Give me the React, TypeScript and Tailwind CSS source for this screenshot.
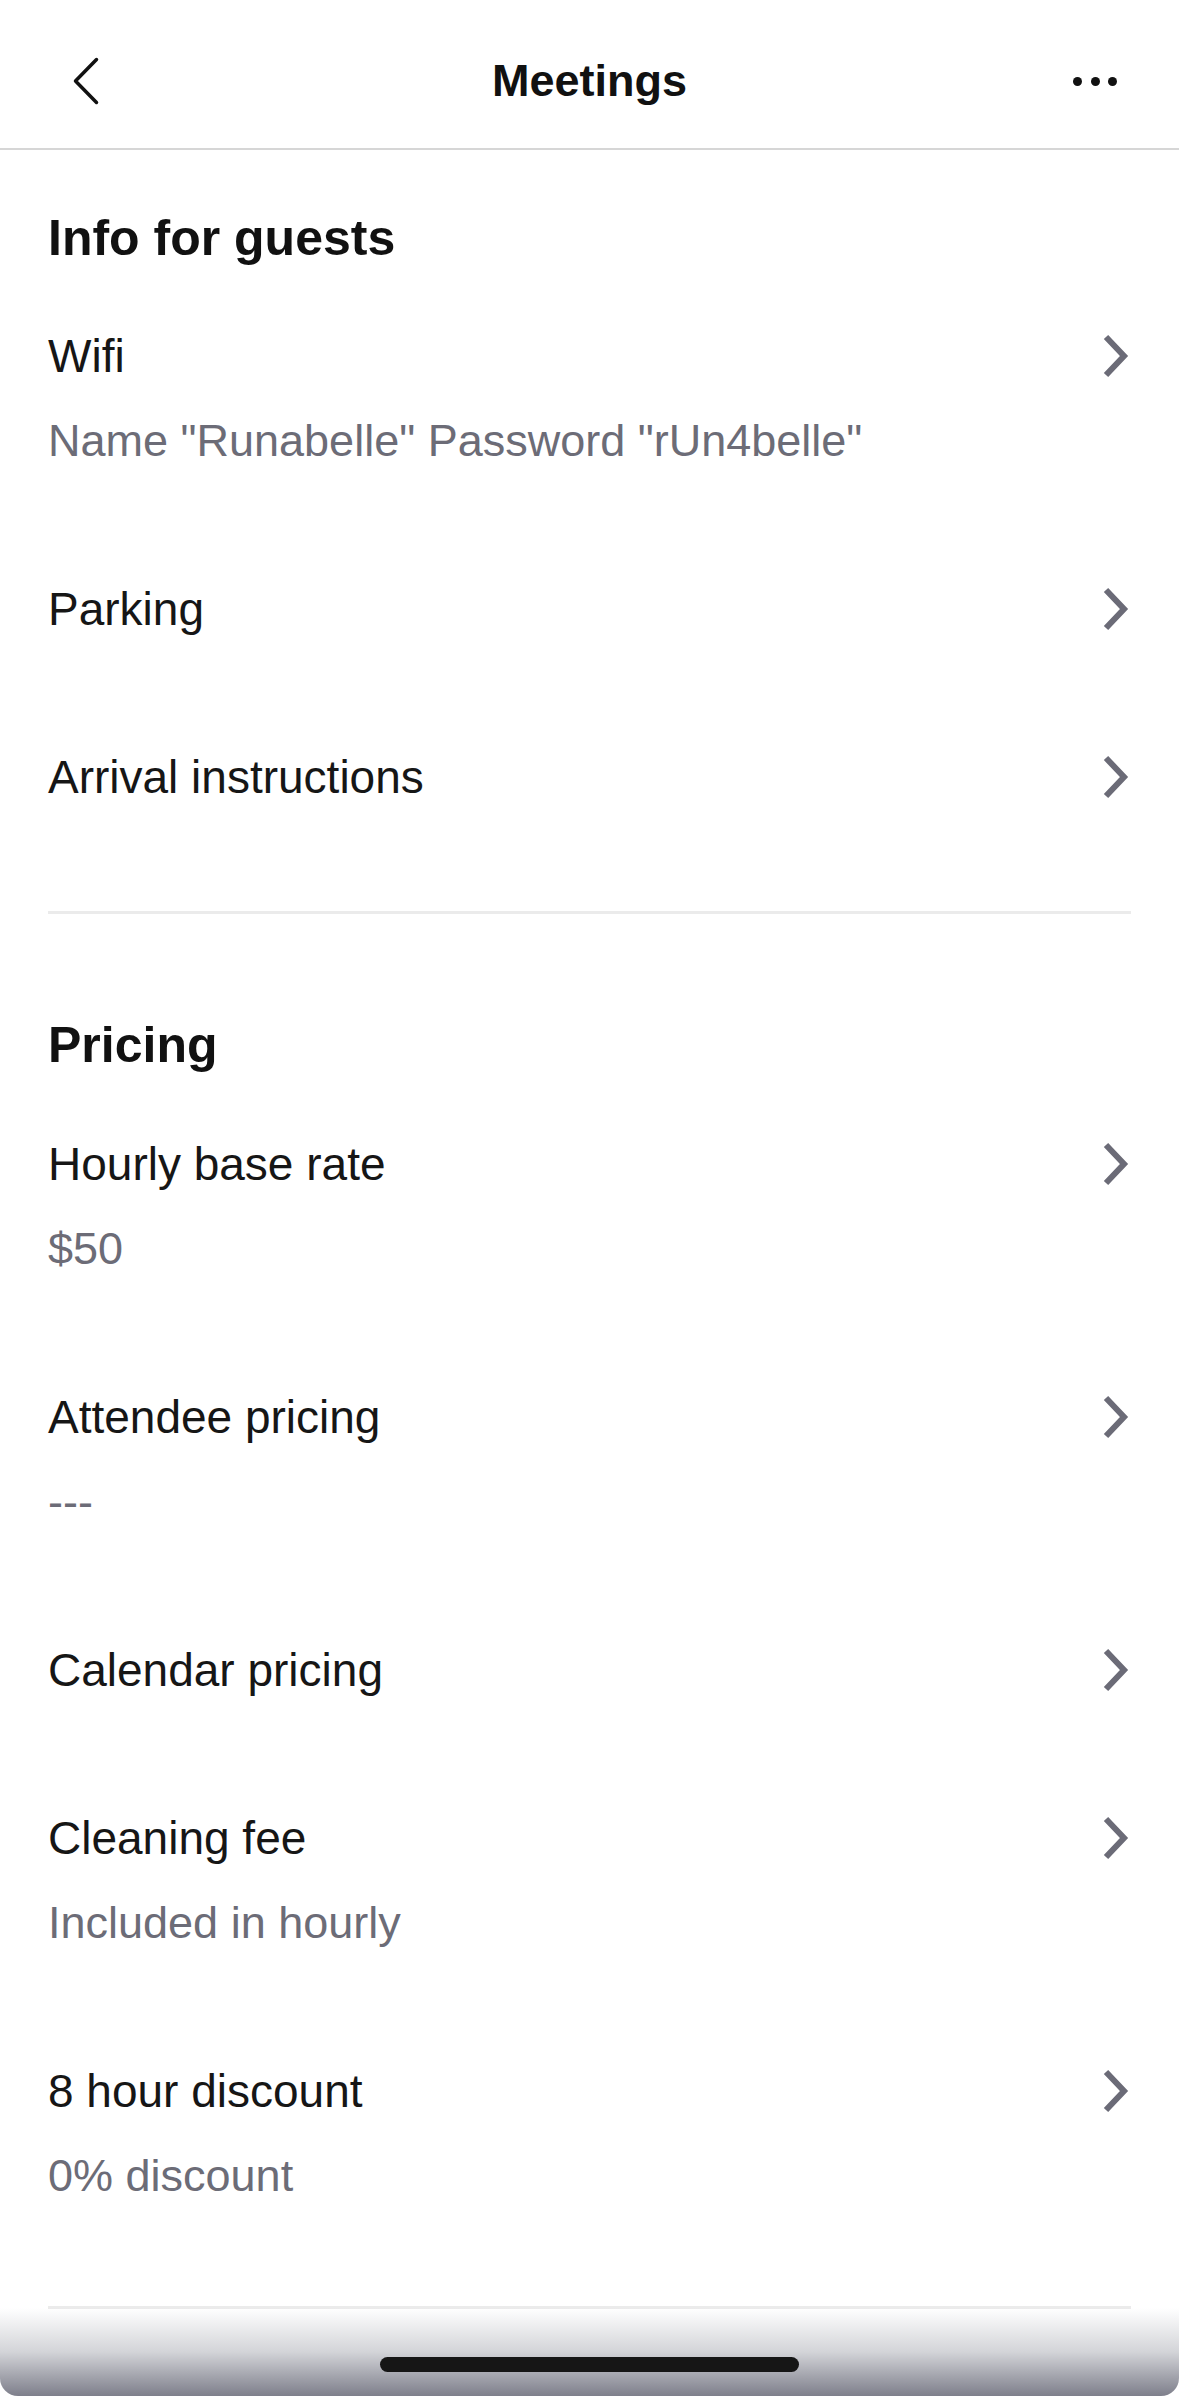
import React from 'react';

type Row = { title: string; sub?: string };

const guestRows: Row[] = [
  { title: 'Wifi', sub: 'Name "Runabelle" Password "rUn4belle"' },
  { title: 'Parking' },
  { title: 'Arrival instructions' },
];

const pricingRows: Row[] = [
  { title: 'Hourly base rate', sub: '$50' },
  { title: 'Attendee pricing', sub: '---' },
  { title: 'Calendar pricing' },
  { title: 'Cleaning fee', sub: 'Included in hourly' },
  { title: '8 hour discount', sub: '0% discount' },
];

const Chevron = () => (
  <svg width="30" height="50" viewBox="0 0 30 50" className="shrink-0">
    <polyline points="5,6 23,25 5,44" fill="none" stroke="#6b6b77" strokeWidth={6} strokeLinejoin="miter" />
  </svg>
);

function SettingRow({ title, sub }: Row) {
  return (
    <div className="pt-[55px] pb-[53px]">
      <div className="flex h-[60px] items-center justify-between">
        <span className="text-[46px] leading-[60px] text-[#161616]">{title}</span>
        <Chevron />
      </div>
      {sub && <div className="mt-[25px] text-[45px] leading-[60px] text-[#6c6c77]">{sub}</div>}
    </div>
  );
}

export default function App() {
  return (
    <div
      className="relative h-[2396px] w-[1179px] overflow-hidden bg-white"
      style={{ fontFamily: '"Liberation Sans", Arial, sans-serif' }}
    >
      {/* Barre du haut */}
      <header className="flex h-[150px] items-center border-b-2 border-[#d6d6d6] pt-[14px]">
        <div className="flex w-[150px] pl-[70px]">
          <svg width="32" height="52" viewBox="0 0 32 52">
            <polyline
              points="26.5,4.5 5.5,26 26.5,47.5"
              fill="none"
              stroke="#111"
              strokeWidth={3.5}
              strokeLinecap="round"
              strokeLinejoin="round"
            />
          </svg>
        </div>
        <h1 className="flex-1 text-center text-[45px] font-bold leading-[56px] text-[#111]">Meetings</h1>
        <div className="flex w-[150px] justify-end gap-[8.5px] pr-[62px]">
          <span className="h-[9px] w-[9px] rounded-full bg-[#111]" />
          <span className="h-[9px] w-[9px] rounded-full bg-[#111]" />
          <span className="h-[9px] w-[9px] rounded-full bg-[#111]" />
        </div>
      </header>

      <main className="px-[48px]">
        <h2 className="pt-[58px] pb-[3px] text-[50px] font-bold leading-[60px] text-[#111]">Info for guests</h2>
        {guestRows.map((r) => (
          <SettingRow key={r.title} {...r} />
        ))}
        <div className="mt-[51px] h-[3px] bg-[#ebebeb]" />

        <h2 className="pt-[101px] pb-[4px] text-[50px] font-bold leading-[60px] text-[#111]">Pricing</h2>
        {pricingRows.map((r) => (
          <SettingRow key={r.title} {...r} />
        ))}
        <div className="mt-[47px] h-[3px] bg-[#ebebeb]" />
      </main>

      {/* Dégradé + barre d'accueil */}
      <div className="absolute inset-x-0 bottom-0 h-[88px] rounded-b-[18px] bg-gradient-to-b from-white/0 via-[#d3d4d8] to-[#7e7f8b]">
        <div className="absolute bottom-[24px] left-[380px] h-[15px] w-[419px] rounded-full bg-[#161616]" />
      </div>
    </div>
  );
}
